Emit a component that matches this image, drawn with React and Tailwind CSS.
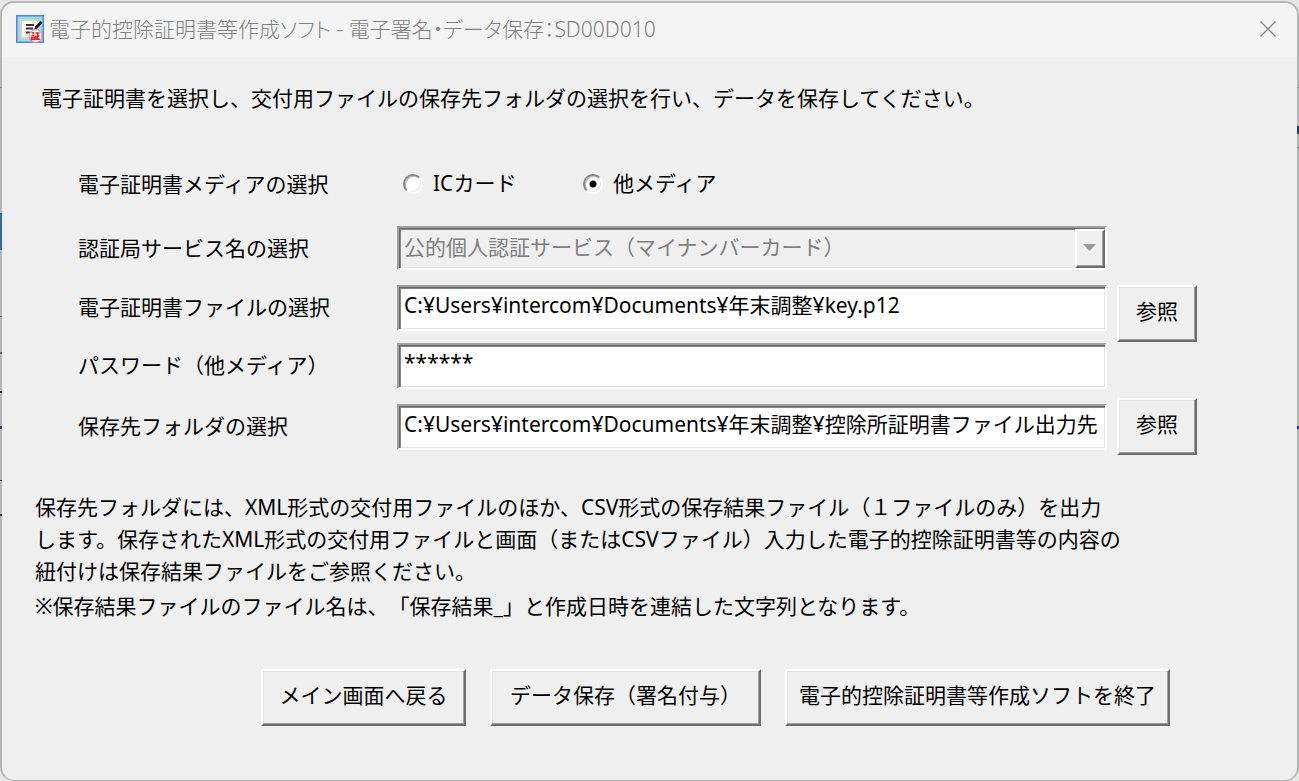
import { useState } from 'react'

const FIELD =
  'h-[46px] w-full min-w-0 rounded-none border-2 border-t-[#a0a0a0] border-l-[#a0a0a0] border-r-white border-b-white bg-white pr-0 pl-[5px] pb-2 outline-none shadow-[inset_1px_1px_0_#696969,inset_2px_2px_0_#868686,inset_-1px_-1px_0_#e3e3e3]'
const BUTTON =
  'h-[57px] shrink-0 border-2 border-t-white border-l-white border-r-[#6d6d6d] border-b-[#6d6d6d] bg-[#efefef] pb-1 whitespace-nowrap shadow-[inset_-1px_-1px_0_#a0a0a0,inset_1px_1px_0_#e3e3e3]'
const LABEL = 'w-[319px] shrink-0 leading-[44px]'

// Bits of the parent window that show along the dialog's edge
const EDGE = [
  'left-0 top-[87px] h-px bg-[#8a8a8a]',
  'left-0 top-[213px] h-[37px] bg-[#2f6fa8]',
  'left-0 top-[316px] h-px bg-[#777777]',
  'left-0 top-[352px] h-[2px] bg-[#666666]',
  'left-0 top-[391px] h-[2px] bg-[#222222]',
  'left-0 top-[426px] h-[3px] bg-[#3030b0]',
  'left-0 top-[480px] h-px bg-[#333333]',
  'left-0 top-[514px] h-[2px] bg-[#333333]',
  'right-0 top-[87px] h-px bg-[#8a8a8a]',
  'right-0 top-[126px] h-[8px] bg-[#2c3c58]',
  'right-0 top-[147px] h-px bg-[#777777]',
  'right-0 top-[426px] h-[3px] bg-[#3030b0]',
]

function AppIcon() {
  return (
    <svg viewBox="0 0 28 28" className="h-7 w-7 shrink-0" aria-hidden="true">
      <rect width="28" height="28" fill="#5b80dc" />
      <rect x="1.5" y="1.5" width="25" height="25" fill="#8fdcf5" />
      <path d="M4 4h19v20H4z" fill="#e5d3a0" />
      <path d="M6 6h15v16H6z" fill="#ffffff" />
      <path d="M10 10h8M10 13.500h7M10 17.500h4" stroke="#333333" strokeWidth="1.8" />
      <path d="M25.500 7l-6 6" stroke="#111111" strokeWidth="2.6" />
      <path d="M20 11.500l-3 4 4-2z" fill="#111111" />
      <circle cx="19.500" cy="21" r="6.500" fill="#ffffff" stroke="#f57a80" strokeWidth="1" />
      <path d="M15.500 18h3M15.500 20.500h3M15.500 22.500h3v2h-3zM19.500 18h4M21.700 18v6M19.500 24.300h4.500M20 20.500v3.500M22 21h1.500" stroke="#e8202c" strokeWidth="1.6" fill="none" />
    </svg>
  )
}

function Radio({ label, value, media, setMedia }) {
  return (
    <label className="flex w-[180px] items-center gap-[10px]">
      <input
        type="radio"
        name="media"
        value={value}
        checked={media === value}
        onChange={() => setMedia(value)}
        className="h-5 w-5 shrink-0 appearance-none rounded-full border-2 border-t-[#858585] border-l-[#858585] border-r-white border-b-white bg-white shadow-[inset_1px_1px_0_#bcbcbc,inset_-1px_-1px_0_#e3e3e3] checked:bg-[radial-gradient(circle,#000000_3px,#ffffff_4px)]"
      />
      {label}
    </label>
  )
}

export default function App() {
  const [media, setMedia] = useState('other')
  const [certFile, setCertFile] = useState('C:¥Users¥intercom¥Documents¥年末調整¥key.p12')
  const [password, setPassword] = useState('******')
  const [folder, setFolder] = useState('C:¥Users¥intercom¥Documents¥年末調整¥控除所証明書ファイル出力先')

  return (
    <div className="relative flex min-h-screen flex-col bg-[#e6e8e6] pt-px font-['Noto_Sans','Noto_Sans_CJK_JP',sans-serif] text-[21px] text-black [text-spacing-trim:space-all]">
      <main className="flex flex-1 flex-col overflow-hidden rounded-[14px] border-2 border-b border-[#b4b6b5] bg-[#efefef]">
        <header className="flex h-[54px] items-center gap-[5px] bg-[#f3f3f3] pr-5 pb-[3px] pl-[14px] text-[#808080]">
          <AppIcon />
          <h1 className="flex-1 text-[21px] leading-8 font-light [font-feature-settings:'palt']">
            電子的控除証明書等作成ソフト - 電子署名・データ保存：SD00D010
          </h1>
          <button type="button" aria-label="閉じる" className="p-px">
            <svg viewBox="0 0 16 16" className="h-4 w-4" stroke="#8a8a8a" strokeWidth="1.3" aria-hidden="true">
              <path d="M0.500 0.500l15 15M15.500 0.500l-15 15" />
            </svg>
          </button>
        </header>

        <p className="px-[39px] pt-[25px] leading-8">
          電子証明書を選択し、交付用ファイルの保存先フォルダの選択を行い、データを保存してください。
        </p>

        <form className="pt-[48px] pr-[100px] pl-[76px]" onSubmit={(e) => e.preventDefault()}>
          <div role="radiogroup" aria-labelledby="media-label" className="flex items-center">
            <span id="media-label" className={LABEL}>電子証明書メディアの選択</span>
            <div className="flex pl-[6px]">
              <Radio label="ICカード" value="ic" media={media} setMedia={setMedia} />
              <Radio label="他メディア" value="other" media={media} setMedia={setMedia} />
            </div>
          </div>

          <div className="mt-5 flex items-start pr-[90px]">
            <label htmlFor="service" className={LABEL}>認証局サービス名の選択</label>
            <div className="relative min-w-0 flex-1">
              <select
                id="service"
                disabled
                className="block h-[44px] w-full appearance-none rounded-none border-2 border-t-[#a0a0a0] border-l-[#a0a0a0] border-r-white border-b-white bg-[#efefef] px-[5px] text-[#808080] opacity-100 shadow-[inset_1px_1px_0_#696969,inset_2px_2px_0_#868686,inset_-1px_-1px_0_#e3e3e3]"
              >
                <option>公的個人認証サービス（マイナンバーカード）</option>
              </select>
              <span className="pointer-events-none absolute top-[3px] right-[2px] bottom-[2px] flex w-[30px] items-center justify-center border-2 border-t-white border-l-white border-r-[#6d6d6d] border-b-[#6d6d6d] bg-[#efefef] shadow-[inset_-1px_-1px_0_#a0a0a0]">
                <svg viewBox="0 0 14 9" className="h-[9px] w-[14px]" aria-hidden="true">
                  <path d="M14 2L8 9L6 8z" fill="#ffffff" />
                  <path d="M0 0h13L6.500 7z" fill="#9a9a9a" />
                </svg>
              </span>
            </div>
          </div>

          <div className="mt-[15px] flex items-start gap-[10px]">
            <div className="flex min-w-0 flex-1">
              <label htmlFor="cert" className={LABEL}>電子証明書ファイルの選択</label>
              <input id="cert" type="text" value={certFile} onChange={(e) => setCertFile(e.target.value)} className={FIELD} />
            </div>
            <button type="button" className={`${BUTTON} w-20`}>参照</button>
          </div>

          <div className="mt-px flex items-start pr-[90px]">
            <label htmlFor="password" className={LABEL}>パスワード（他メディア）</label>
            <input id="password" type="text" value={password} onChange={(e) => setPassword(e.target.value)} className={FIELD} />
          </div>

          <div className="mt-[9px] flex items-center gap-[10px]">
            <div className="flex min-w-0 flex-1">
              <label htmlFor="folder" className={LABEL}>保存先フォルダの選択</label>
              <input id="folder" type="text" value={folder} onChange={(e) => setFolder(e.target.value)} className={FIELD} />
            </div>
            <button type="button" className={`${BUTTON} w-20`}>参照</button>
          </div>
        </form>

        <div className="px-[33px] pt-9 leading-8">
          <p>
            保存先フォルダには、XML形式の交付用ファイルのほか、CSV形式の保存結果ファイル（１ファイルのみ）を出力
            <br />
            します。保存されたXML形式の交付用ファイルと画面（またはCSVファイル）入力した電子的控除証明書等の内容の
            <br />
            紐付けは保存結果ファイルをご参照ください。
          </p>
          <p className="pt-[3px]">※保存結果ファイルのファイル名は、「保存結果_」と作成日時を連結した文字列となります。</p>
        </div>

        <footer className="flex justify-end gap-6 pt-[47px] pr-[127px] pb-[52px]">
          <button type="button" className={`${BUTTON} w-[205px]`}>メイン画面へ戻る</button>
          <button type="button" className={`${BUTTON} w-[271px]`}>データ保存（署名付与）</button>
          <button type="button" className={`${BUTTON} w-[385px]`}>電子的控除証明書等作成ソフトを終了</button>
        </footer>
      </main>
      {EDGE.map((c) => (
        <span key={c} aria-hidden="true" className={`absolute w-[2px] ${c}`} />
      ))}
    </div>
  )
}
